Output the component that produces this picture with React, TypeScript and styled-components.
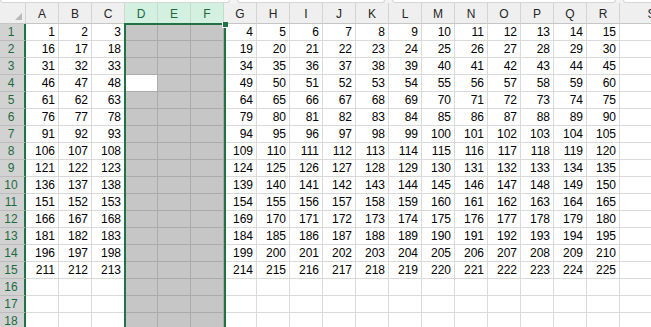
import { Fragment } from "react";
import styled, { createGlobalStyle } from "styled-components";

const GREEN = "#217346";
const COLS = "ABCDEFGHIJKLMNOPQRS".split("");
const SELECTED = ["D", "E", "F"];
const ROWS = 18;

const GlobalStyle = createGlobalStyle`
  html, body {
    margin: 0;
    padding: 0;
    background: #ffffff;
    overflow: hidden;
  }
  body {
    font-family: "Liberation Sans", Arial, sans-serif;
  }
`;

const Sheet = styled.div`
  position: relative;
  width: 651px;
  height: 327px;
  overflow: hidden;
  background: #ffffff;
`;

const TopBar = styled.div`
  display: flex;
  gap: 7px;
  height: 3px;
  background: #f3f3f3;
`;

const TopBox = styled.div<{ w: number }>`
  width: ${({ w }) => w}px;
  flex-shrink: 0;
  height: 2px;
  background: #ffffff;
  border: 1px solid #d6d6d6;
  border-top: none;
  border-radius: 0 0 3px 3px;
`;

const Grid = styled.div`
  display: grid;
  grid-template-columns: 26px repeat(18, 33px) 64px;
  grid-template-rows: 21px repeat(${ROWS}, 17px);
`;

const Corner = styled.div`
  position: relative;
  background: #efefef;
  border-right: 1px solid #d4d4d4;
  border-bottom: 1px solid #c6c6c6;
  box-sizing: border-box;

  &::after {
    content: "";
    position: absolute;
    right: 3px;
    bottom: 3px;
    width: 0;
    height: 0;
    border-left: 7px solid transparent;
    border-bottom: 7px solid #b9b9b9;
  }
`;

const ColHeader = styled.div<{ selected: boolean }>`
  box-sizing: border-box;
  padding-top: 3px;
  line-height: 17px;
  font-size: 12px;
  text-align: center;
  color: ${({ selected }) => (selected ? "#1d6a3e" : "#262626")};
  background: ${({ selected }) => (selected ? "#d3f0e0" : "#efefef")};
  border-right: 1px solid ${({ selected }) => (selected ? "#c2dccd" : "#d4d4d4")};
  border-bottom: 1px solid ${({ selected }) => (selected ? GREEN : "#c6c6c6")};
`;

const RowHeader = styled.div`
  box-sizing: border-box;
  line-height: 16px;
  font-size: 12px;
  text-align: center;
  padding-right: 2px;
  color: #1d6a3e;
  background: #d2d2d2;
  border-right: 2px solid ${GREEN};
  border-bottom: 1px solid #bcbcbc;
`;

const Cell = styled.div<{ selected: boolean; active: boolean }>`
  box-sizing: border-box;
  padding-right: 3px;
  line-height: 16px;
  font-size: 12px;
  text-align: right;
  color: #000000;
  white-space: nowrap;
  background: ${({ selected, active }) =>
    active ? "#ffffff" : selected ? "#c6c6c6" : "#ffffff"};
  border-right: 1px solid ${({ selected }) => (selected ? "#ababab" : "#dadada")};
  border-bottom: 1px solid ${({ selected }) => (selected ? "#ababab" : "#dadada")};
`;

// green outline around the selected columns, drawn over the grid
const Selection = styled.div`
  position: absolute;
  box-sizing: border-box;
  left: 124px;
  top: 23px;
  width: 102px;
  height: 320px;
  border: 2px solid ${GREEN};
  border-bottom: none;
  pointer-events: none;
`;

const FillHandle = styled.div`
  position: absolute;
  right: -4px;
  top: -3px;
  width: 5px;
  height: 5px;
  background: ${GREEN};
  border-left: 1px solid #ffffff;
  border-bottom: 1px solid #ffffff;
`;

const valueFor = (row: number, colIdx: number): number | null => {
  if (row > 15) return null;
  let k: number;
  if (colIdx < 3) k = colIdx;
  else if (colIdx >= 6 && colIdx <= 17) k = colIdx - 3;
  else return null;
  return (row - 1) * 15 + k + 1;
};

const App = () => {
  const rows = Array.from({ length: ROWS }, (_, i) => i + 1);

  return (
    <Sheet>
      <GlobalStyle />
      <TopBar>
        <TopBox w={228} />
        <TopBox w={146} />
        <TopBox w={222} />
        <TopBox w={40} />
      </TopBar>
      <Grid>
        <Corner />
        {COLS.map((c) => (
          <ColHeader key={c} selected={SELECTED.includes(c)}>
            {c}
          </ColHeader>
        ))}
        {rows.map((r) => (
          <Fragment key={r}>
            <RowHeader>{r}</RowHeader>
            {COLS.map((c, ci) => (
              <Cell
                key={c}
                selected={SELECTED.includes(c)}
                active={c === "D" && r === 4}
              >
                {valueFor(r, ci)}
              </Cell>
            ))}
          </Fragment>
        ))}
      </Grid>
      <Selection>
        <FillHandle />
      </Selection>
    </Sheet>
  );
};

export default App;
